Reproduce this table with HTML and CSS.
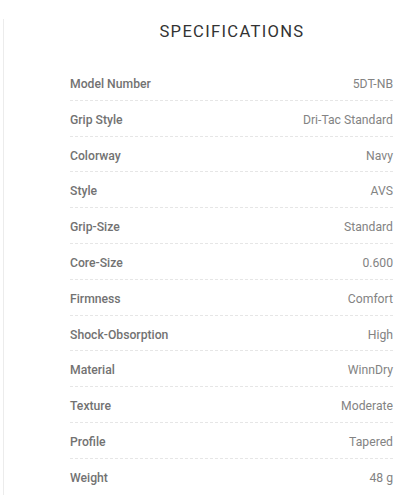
FILE: index.html
```html
<!DOCTYPE html>
<html>
<head>
<meta charset="utf-8">
<link rel="stylesheet" href="styles.css">
</head>
<body>
<section class="specs">
  <h2 class="specs-title">SPECIFICATIONS</h2>
  <ul class="spec-list">
    <li class="spec-row"><span class="spec-label">Model Number</span><span class="spec-value">5DT-NB</span></li>
    <li class="spec-row"><span class="spec-label">Grip Style</span><span class="spec-value">Dri-Tac Standard</span></li>
    <li class="spec-row"><span class="spec-label">Colorway</span><span class="spec-value">Navy</span></li>
    <li class="spec-row"><span class="spec-label">Style</span><span class="spec-value">AVS</span></li>
    <li class="spec-row"><span class="spec-label">Grip-Size</span><span class="spec-value">Standard</span></li>
    <li class="spec-row"><span class="spec-label">Core-Size</span><span class="spec-value">0.600</span></li>
    <li class="spec-row"><span class="spec-label">Firmness</span><span class="spec-value">Comfort</span></li>
    <li class="spec-row"><span class="spec-label">Shock-Obsorption</span><span class="spec-value">High</span></li>
    <li class="spec-row"><span class="spec-label">Material</span><span class="spec-value">WinnDry</span></li>
    <li class="spec-row"><span class="spec-label">Texture</span><span class="spec-value">Moderate</span></li>
    <li class="spec-row"><span class="spec-label">Profile</span><span class="spec-value">Tapered</span></li>
    <li class="spec-row"><span class="spec-label">Weight</span><span class="spec-value">48 g</span></li>
  </ul>
</section>
</body>
</html>
```

FILE: styles.css
```css
html, body {
  margin: 0;
  padding: 0;
  background: #ffffff;
}
body {
  font-family: Roboto, "Liberation Sans", sans-serif;
}
.specs {
  margin: 19px 0 0 3px;
  border-left: 1px solid #ececec;
  padding: 3px 25px 4px 66px;
  height: 476px;
  box-sizing: border-box;
}
.specs-title {
  margin: 0;
  font-size: 16.6px;
  line-height: 20px;
  font-weight: 400;
  letter-spacing: 1.3px;
  color: #333333;
  text-align: center;
  padding-left: 1px;
}
.spec-list {
  list-style: none;
  margin: 23px 0 0 0;
  padding: 0;
}
.spec-row {
  display: flex;
  justify-content: space-between;
  align-items: center;
  padding: 9px 0 5.8px;
  line-height: 20px;
  font-size: 12.2px;
  border-bottom: 1px dashed #e6e6e6;
}
.spec-row:last-child {
  border-bottom: none;
}
.spec-label {
  font-weight: 500;
  color: #727272;
}
.spec-value {
  font-weight: 400;
  color: #838383;
}
```
